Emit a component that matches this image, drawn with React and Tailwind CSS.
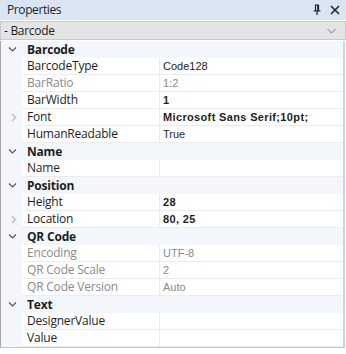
const rows = [
  { cat: 'Barcode' },
  { name: 'BarcodeType', value: 'Code128' },
  { name: 'BarRatio', value: '1:2', dim: true },
  { name: 'BarWidth', value: '1', bold: true },
  { name: 'Font', value: 'Microsoft Sans Serif;10pt;', bold: true, expand: true },
  { name: 'HumanReadable', value: 'True' },
  { cat: 'Name' },
  { name: 'Name', value: '' },
  { cat: 'Position' },
  { name: 'Height', value: '28', bold: true },
  { name: 'Location', value: '80, 25', bold: true, expand: true },
  { cat: 'QR Code' },
  { name: 'Encoding', value: 'UTF-8', dim: true },
  { name: 'QR Code Scale', value: '2', dim: true },
  { name: 'QR Code Version', value: 'Auto', dim: true },
  { cat: 'Text' },
  { name: 'DesignerValue', value: '' },
  { name: 'Value', value: '' },
]

function Chevron({ down, light }) {
  return (
    <svg width="9" height="9" viewBox="0 0 9 9" className="shrink-0">
      {down ? (
        <path d="M1 2.5 L4.5 6 L8 2.5" fill="none" stroke={light ? '#b0b0b0' : '#555'} strokeWidth="1.2" />
      ) : (
        <path d="M3 1 L6.5 4.5 L3 8" fill="none" stroke={light ? '#b8b8b8' : '#555'} strokeWidth="1.2" />
      )}
    </svg>
  )
}

export default function App() {
  const label = { fontFamily: '"Open Sans", "Noto Sans", sans-serif' }
  const val = { fontFamily: '"Liberation Sans", Arial, sans-serif' }
  return (
    <div className="w-[346px] h-[354px] bg-white overflow-hidden text-[12px] text-[#1e1e1e]" style={label}>
      <div className="h-[20px] bg-[#d9e5f3] flex items-center pl-[7px] pr-[6px]">
        <span className="flex-1 text-[12px] text-[#1e1e1e] tracking-[-0.4px]">Properties</span>
        <svg width="10" height="12" viewBox="0 0 10 12" className="mr-[8px]">
          <path d="M3 1 H7 M3.5 1 V7 M6.5 1 V7 M1.5 7 H8.5 M5 7 V11 M5.8 1 V7" stroke="#1e1e1e" strokeWidth="1.2" fill="none" />
        </svg>
        <svg width="10" height="10" viewBox="0 0 10 10">
          <path d="M1 1 L9 9 M9 1 L1 9" stroke="#1e1e1e" strokeWidth="1.5" />
        </svg>
      </div>
      <div className="h-[19px] mt-[1px] bg-[#e4e4e4] border border-[#c9c9c9] flex items-center pl-[3px] pr-[9px]">
        <span className="flex-1 text-[12px] tracking-[-0.3px]">- Barcode</span>
        <svg width="9" height="6" viewBox="0 0 9 6">
          <path d="M0.5 1 L4.5 5 L8.5 1" fill="none" stroke="#777" strokeWidth="1" />
        </svg>
      </div>
      <div className="mt-[1px] border-l border-[#a8a8a8] border-r-2 border-r-[#c4d5ec] border-b border-b-[#c8c8c8] mr-[1px] bg-[#f3f7fc]">
        {rows.map((r, i) =>
          r.cat ? (
            <div key={i} className="h-[17px] flex items-center">
              <div className="w-[26px] pl-[7px] flex items-center">
                <Chevron down />
              </div>
              <span className="font-bold tracking-[-0.2px]">{r.cat}</span>
            </div>
          ) : (
            <div key={i} className="h-[17px] flex">
              <div className="w-[21px] pl-[8px] flex items-center">
                {r.expand && <Chevron light />}
              </div>
              <div className="flex-1 flex bg-white border-b border-[#ececec]">
                <div
                  className={`w-[138px] pl-[5px] flex items-center border-r border-[#ececec] tracking-[-0.2px] ${r.dim ? 'text-[#8a8a8a]' : ''}`}
                >
                  {r.name}
                </div>
                <div
                  className={`flex-1 pl-[3px] flex items-center text-[11px] ${r.bold ? 'font-bold tracking-[0.35px]' : ''} ${r.dim ? 'text-[#8a8a8a]' : ''}`}
                  style={val}
                >
                  {r.value}
                </div>
              </div>
            </div>
          )
        )}
      </div>
    </div>
  )
}
